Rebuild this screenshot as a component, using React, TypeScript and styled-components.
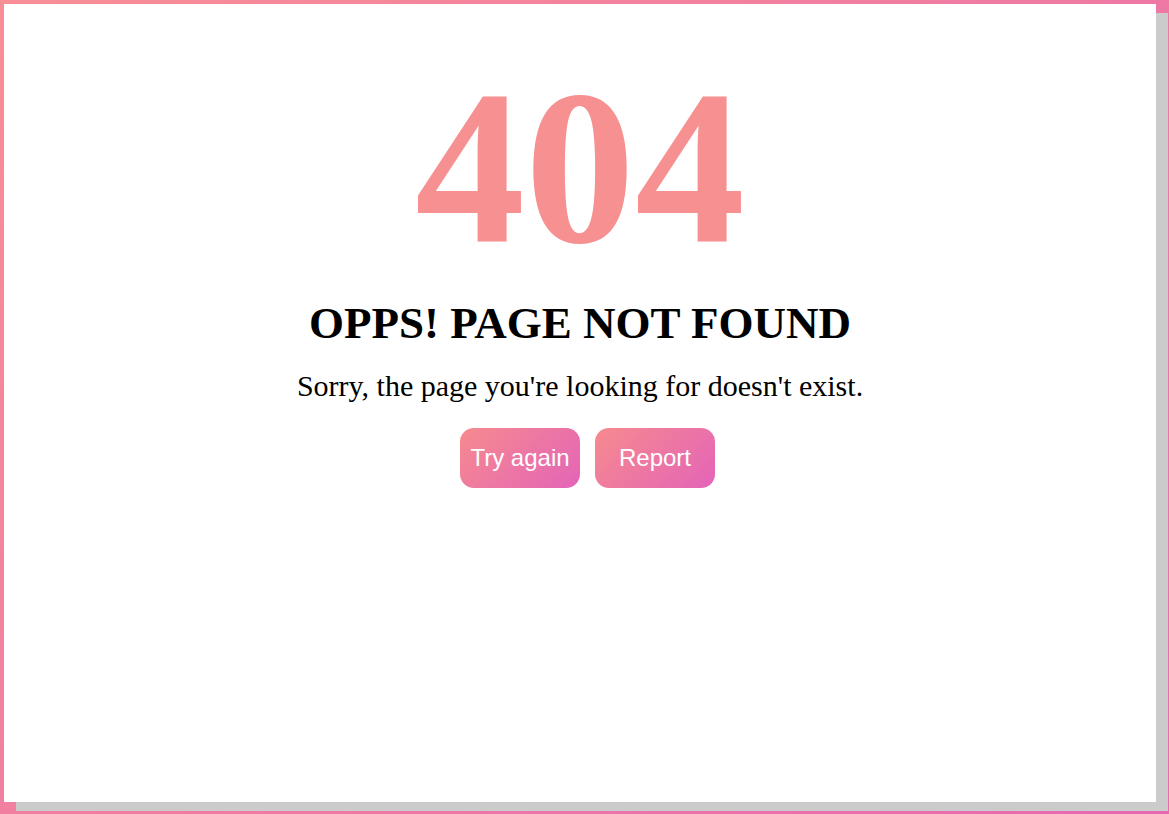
import React from "react";
import styled, { createGlobalStyle } from "styled-components";

const GlobalStyle = createGlobalStyle`
  html, body {
    margin: 0;
    padding: 0;
    height: 100%;
  }
  body {
    background: linear-gradient(135deg, #f88e96 0%, #f07ca2 50%, #e868b2 100%);
    font-family: "Liberation Serif", "Times New Roman", serif;
    overflow: hidden;
  }
`;

const Frame = styled.div`
  box-sizing: border-box;
  width: 1169px;
  height: 814px;
  padding: 4px;
`;

const Card = styled.main`
  box-sizing: border-box;
  width: 1152px;
  height: 798px;
  background: #ffffff;
  box-shadow: 12px 9px 0 #cbcbcb;
  display: flex;
  flex-direction: column;
  align-items: center;
  padding-top: 54px;
`;

const Code = styled.h1`
  margin: 0;
  font-family: "Liberation Serif", "Times New Roman", serif;
  font-weight: 700;
  font-size: 220px;
  line-height: 1;
  color: #f79090;
`;

const Title = styled.h2`
  margin: 21px 0 0;
  font-family: "Liberation Serif", "Times New Roman", serif;
  font-weight: 700;
  font-size: 45px;
  line-height: 1.1;
  color: #000;
`;

const Message = styled.p`
  margin: 19px 0 0;
  font-family: "Liberation Serif", "Times New Roman", serif;
  font-size: 30px;
  line-height: 1.2;
  color: #000;
`;

const Actions = styled.div`
  display: flex;
  gap: 15px;
  padding-left: 15px;
  margin-top: 24px;
`;

const Button = styled.button`
  width: 120px;
  height: 60px;
  border: none;
  border-radius: 14px;
  background: linear-gradient(135deg, #f68a8e 0%, #e464b8 100%);
  color: #fff;
  font-family: "Liberation Sans", Arial, sans-serif;
  font-size: 24px;
  padding: 0;
  cursor: pointer;
`;

export default function App() {
  return (
    <>
      <GlobalStyle />
      <Frame>
        <Card>
          <Code>404</Code>
          <Title>OPPS! PAGE NOT FOUND</Title>
          <Message>Sorry, the page you're looking for doesn't exist.</Message>
          <Actions>
            <Button>Try again</Button>
            <Button>Report</Button>
          </Actions>
        </Card>
      </Frame>
    </>
  );
}
